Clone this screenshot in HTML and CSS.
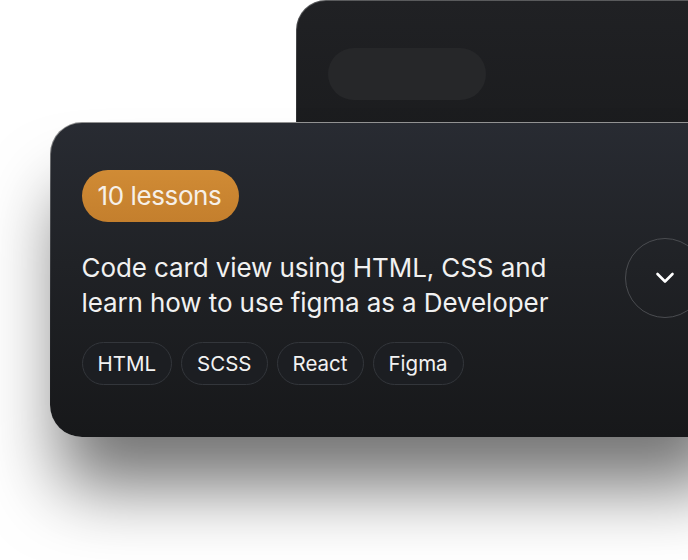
FILE: index.html
```html
<!DOCTYPE html>
<html lang="en">
<head>
<meta charset="utf-8">
<title>Course card</title>
<link rel="stylesheet" href="styles.css">
</head>
<body>
<main class="stage">
  <div class="card-back">
    <div class="skeleton-pill"></div>
  </div>
  <article class="card">
    <span class="badge">10 lessons</span>
    <div class="card-row">
      <h2 class="title">Code card view using HTML, CSS and learn how to use figma as a Developer</h2>
      <button class="toggle" aria-label="Expand">
        <svg width="22" height="14" viewBox="0 0 22 14" fill="none"><path d="M3.5 3 L11 10.5 L18.5 3" stroke="#ffffff" stroke-width="2.6" stroke-linecap="round" stroke-linejoin="round"/></svg>
      </button>
    </div>
    <ul class="tags">
      <li class="tag">HTML</li>
      <li class="tag">SCSS</li>
      <li class="tag">React</li>
      <li class="tag">Figma</li>
    </ul>
  </article>
</main>
</body>
</html>
```

FILE: styles.css
```css
html, body {
  margin: 0;
  padding: 0;
  background: #ffffff;
  overflow: hidden;
}
body {
  width: 688px;
  height: 560px;
  font-family: Inter, "Noto Sans", sans-serif;
}
.stage {
  display: flex;
  flex-direction: column;
}
.card-back {
  margin-left: 296px;
  width: 440px;
  height: 160px;
  box-sizing: border-box;
  border: 1.5px solid transparent;
  border-radius: 30px;
  background:
    linear-gradient(180deg, #202124 0%, #1a1b1d 100%) padding-box,
    linear-gradient(180deg, #5a5b5d 0%, #3a3b3d 40%, #2a2b2d 100%) border-box;
  padding: 46.5px 0 0 30.5px;
}
.skeleton-pill {
  width: 158px;
  height: 52px;
  border-radius: 26px;
  background: #262729;
}
.card {
  margin-top: -38px;
  margin-left: 50px;
  width: 686px;
  box-sizing: border-box;
  border: 1.5px solid transparent;
  border-radius: 32px;
  background:
    linear-gradient(180deg, #282b32 0%, #202226 45%, #17181a 100%) padding-box,
    linear-gradient(180deg, #929292 0%, #55575b 20%, #26282c 60%, #17181a 100%) border-box;
  padding: 46.5px 30.5px 51.5px 30.5px;
  box-shadow: 0 60px 70px -10px rgba(0, 0, 0, 0.55);
  display: flex;
  flex-direction: column;
  align-items: flex-start;
}
.badge {
  display: inline-flex;
  align-items: center;
  height: 52px;
  padding: 0 17.5px 0 16px;
  border-radius: 26px;
  background: linear-gradient(180deg, #d08b35 0%, #c47f2d 100%);
  color: #f6f0e8;
  font-size: 26px;
  letter-spacing: -0.4px;
}
.card-row {
  display: flex;
  align-items: flex-start;
  justify-content: space-between;
  width: 100%;
  margin-top: 28px;
}
.title {
  margin: 0;
  width: 500px;
  font-size: 26px;
  font-weight: 400;
  line-height: 35px;
  color: #f1f1f1;
  letter-spacing: -0.1px;
}
.toggle {
  margin-top: -12px;
  width: 80px;
  height: 80px;
  flex: none;
  box-sizing: border-box;
  border-radius: 50%;
  border: 1.5px solid #4a4c50;
  background: transparent;
  display: flex;
  align-items: center;
  justify-content: center;
  padding: 0;
}
.tags {
  list-style: none;
  margin: 22px 0 0 0;
  padding: 0;
  display: flex;
  gap: 9px;
}
.tag {
  height: 43px;
  box-sizing: border-box;
  padding: 0 15px;
  display: flex;
  align-items: center;
  border-radius: 22px;
  border: 1.5px solid #33363b;
  background: #1c1e22;
  color: #f2f2f2;
  font-size: 20.5px;
}
```
